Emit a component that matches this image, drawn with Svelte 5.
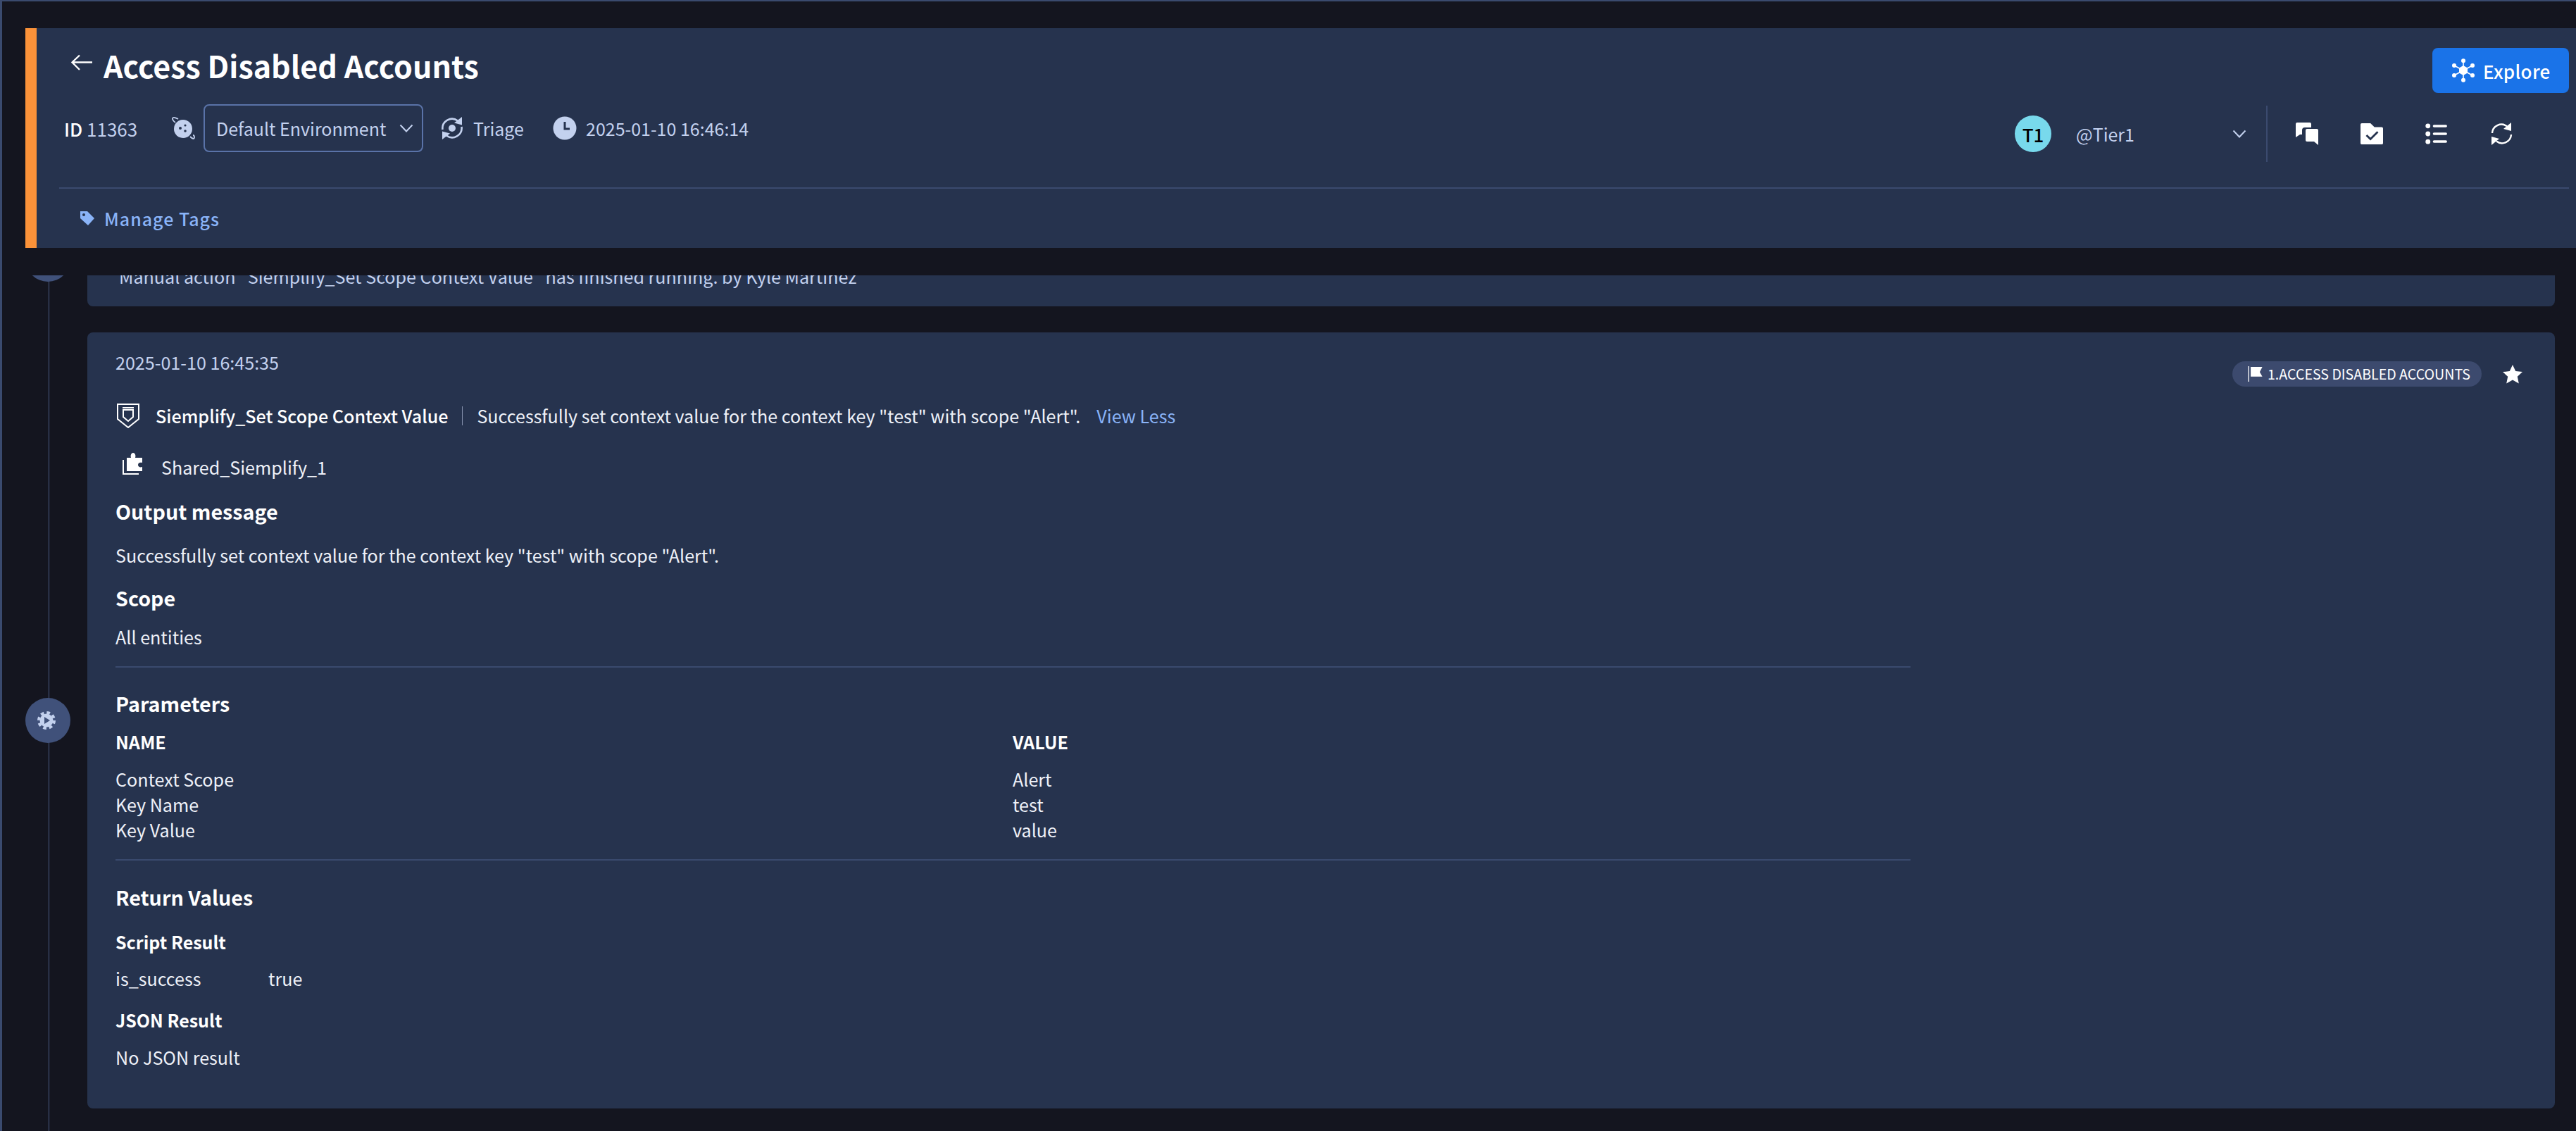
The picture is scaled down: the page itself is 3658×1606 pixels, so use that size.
<script>
  const params = [
    ['Context Scope', 'Alert'],
    ['Key Name', 'test'],
    ['Key Value', 'value']
  ];
</script>

<div class="page">
  <header class="header">
    <div class="top">
      <div class="left">
        <div class="title-row">
          <svg class="arrow" viewBox="0 0 32 24" fill="none" stroke="#fff" stroke-width="2.4"><path d="M31 11.500H3M13 1.500 2.500 11.500 13 22"/></svg>
          <h1>Access Disabled Accounts</h1>
        </div>
        <div class="meta">
          <span class="id"><b>ID</b> 11363</span>
          <svg class="planet" viewBox="0 0 34 34"><circle cx="17" cy="18" r="13" fill="#c3d1ee"/><circle cx="13" cy="17" r="2" fill="#26334e"/><circle cx="20" cy="13" r="1.600" fill="#26334e"/><circle cx="20" cy="21" r="1.800" fill="#26334e"/><path d="M6 9C2 6 1 3 3 2s5 1 7 2M27 29c3 3 6 4 6 1s-2-3-2-3" fill="none" stroke="#c3d1ee" stroke-width="1.800"/></svg>
          <div class="select">
            <span>Default Environment</span>
            <svg class="chev" viewBox="0 0 20 12" fill="none" stroke="#c3d1ee" stroke-width="2"><path d="M1.500 1.500 10 10.500l8.500-9"/></svg>
          </div>
          <svg class="triage" viewBox="0 0 32 32" fill="none" stroke="#c3d1ee" stroke-width="2.600"><path d="M2.500 18A13.500 13.500 0 0 1 24 5.500"/><path d="M29.500 14A13.500 13.500 0 0 1 8 26.500"/><path d="M30 0v11.500l-11-3z" fill="#c3d1ee" stroke="none"/><path d="M2 32V20.500l11 3z" fill="#c3d1ee" stroke="none"/><circle cx="16" cy="16" r="5" fill="#c3d1ee" stroke="none"/></svg>
          <span class="light triage-text">Triage</span>
          <svg class="clock" viewBox="0 0 34 34"><circle cx="17" cy="17" r="16.500" fill="#c3d1ee"/><path d="M17 8v10h7" fill="none" stroke="#26334e" stroke-width="3"/></svg>
          <span class="light">2025-01-10 16:46:14</span>
        </div>
      </div>
      <div class="right">
        <button class="explore">
          <svg viewBox="0 0 32 34" fill="#fff"><g stroke="#fff" stroke-width="1.600"><path d="M16 3v28M3 10l26 14M29 10 3 24"/></g><path d="M16 10l6 3.500v7L16 24l-6-3.500v-7z"/><circle cx="16" cy="3.200" r="3"/><circle cx="16" cy="30.800" r="3"/><circle cx="3" cy="10" r="3"/><circle cx="29" cy="10" r="3"/><circle cx="3" cy="24" r="3"/><circle cx="29" cy="24" r="3"/></svg>
          Explore
        </button>
        <div class="actions">
          <span class="avatar">T1</span>
          <span class="user">@Tier1</span>
          <svg class="chev" viewBox="0 0 20 12" fill="none" stroke="#c3d1ee" stroke-width="2"><path d="M1.500 1.500 10 10.500l8.500-9"/></svg>
          <span class="vr"></span>
          <div class="tools">
            <svg viewBox="0 0 32 32" fill="#fff"><path d="M2 0h18a2 2 0 0 1 2 2v5h-9a4 4 0 0 0-4 4v6H6l-6 4V2a2 2 0 0 1 2-2z"/><path d="M14 11a2 2 0 0 1 2-2h14a2 2 0 0 1 2 2v21l-6-5H16a2 2 0 0 1-2-2z"/></svg>
            <svg viewBox="0 0 34 32"><path d="M2 0h13l6 6h11a2 2 0 0 1 2 2v22a2 2 0 0 1-2 2H2a2 2 0 0 1-2-2V2a2 2 0 0 1 2-2z" fill="#fff"/><path d="M9 18l6 6 11-11" fill="none" stroke="#26334e" stroke-width="3"/></svg>
            <svg viewBox="0 0 30 28" fill="#fff"><circle cx="3.500" cy="3.500" r="3.200"/><circle cx="3.500" cy="14" r="3.200"/><circle cx="3.500" cy="24.500" r="3.200"/><rect x="10" y="2" width="19" height="3.400" rx="1.700"/><rect x="10" y="12.300" width="19" height="3.400" rx="1.700"/><rect x="10" y="22.600" width="19" height="3.400" rx="1.700"/></svg>
            <svg viewBox="0 0 32 32" fill="none" stroke="#fff" stroke-width="2.400"><path d="M3 15A13 13 0 0 1 24 5.500"/><path d="M30 17a13 13 0 0 1-21 9.500"/><path d="M30 0v12l-11-3z" fill="#fff" stroke="none"/><path d="M2 32V20l11 3z" fill="#fff" stroke="none"/></svg>
          </div>
        </div>
      </div>
    </div>
    <div class="tags">
      <svg viewBox="0 0 22 22"><path d="M1 1h10l10 10-9 10L1 11z" fill="#8ab4f8"/><circle cx="6" cy="6" r="2" fill="#26334e"/></svg>
      <span>Manage Tags</span>
    </div>
  </header>

  <div class="scroller">
    <section class="item first">
      <div class="rail"><span class="node"></span></div>
      <article class="card short">
        <p class="manual">Manual action "Siemplify_Set Scope Context Value" has finished running. by Kyle Martinez</p>
      </article>
    </section>

    <section class="item">
      <div class="rail">
        <span class="node">
          <svg viewBox="0 0 26 26"><circle cx="13" cy="13" r="9.500" fill="#c3d1ee"/><circle cx="13" cy="13" r="11" fill="none" stroke="#c3d1ee" stroke-width="4" stroke-dasharray="4.640 4"/><path d="M10 8l8 5-8 5z" fill="#40517a"/></svg>
        </span>
      </div>
      <article class="card">
        <div class="card-top">
          <time>2025-01-10 16:45:35</time>
          <div class="badges">
            <span class="chip">
              <svg viewBox="0 0 22 24" fill="#fff"><rect width="1.400" height="24" y="0"/><path d="M4 1h18l-4 8 4 7H4z"/></svg>
              <span>1.ACCESS DISABLED ACCOUNTS</span>
            </span>
            <svg class="star" viewBox="0 0 28 27" fill="#fff"><path d="M14 0l4.200 9 9.800 1.100-7.200 6.700 2 9.700L14 21.600 5.200 26.500l2-9.700L0 10.100 9.800 9z"/></svg>
          </div>
        </div>
        <div class="action-line">
          <svg class="shield" viewBox="0 0 32 35"><path d="M1 1h30v21l-15 12L1 22z" fill="none" stroke="#fff" stroke-width="2"/><path d="M9 9h14v10l-7 6-7-6z" fill="none" stroke="#fff" stroke-width="2"/><path d="M8 6h16" stroke="#fff" stroke-width="2"/></svg>
          <strong>Siemplify_Set Scope Context Value</strong>
          <span class="sep"></span>
          <span>Successfully set context value for the context key "test" with scope "Alert".</span>
          <a href="#top">View Less</a>
        </div>
        <div class="integration">
          <svg viewBox="0 0 28 32"><path d="M1 10v20h22" fill="none" stroke="#fff" stroke-width="2"/><path d="M6 7h6c-1-3 0-7 3-7s4 4 3 7h10v7c-3-1-6 0-6 3s3 4 6 3v6H6z" fill="#fff"/></svg>
          <span>Shared_Siemplify_1</span>
        </div>

        <h2 class="h-output">Output message</h2>
        <p class="p-output">Successfully set context value for the context key "test" with scope "Alert".</p>
        <h2 class="h-scope">Scope</h2>
        <p class="p-scope">All entities</p>
        <hr />
        <h2 class="h-params">Parameters</h2>
        <div class="table">
          <div class="th">NAME</div><div class="th">VALUE</div>
          {#each params as [k, v]}
            <div class="td">{k}</div><div class="td">{v}</div>
          {/each}
        </div>
        <hr class="hr2" />
        <h2 class="h-return">Return Values</h2>
        <h3 class="h-script">Script Result</h3>
        <div class="kv"><span>is_success</span><span>true</span></div>
        <h3 class="h-json">JSON Result</h3>
        <p class="p-json">No JSON result</p>
      </article>
    </section>
  </div>
</div>

<style>
  :global(body) {
    margin: 0;
    background: #14151f;
    font-family: "Noto Sans CJK JP", "Noto Sans", sans-serif;
    color: #eef1f8;
  }
  .page {
    box-sizing: border-box;
    height: 1606px;
    overflow: hidden;
    background: #14151f;
    border-top: 2px solid #3a4a6e;
    border-left: 3px solid #3a4a6e;
    display: flex;
    flex-direction: column;
  }
  .header {
    box-sizing: border-box;
    flex: none;
    height: 312px;
    margin: 38px 0 0 33px;
    padding: 0 10px 0 32px;
    background: #26334e;
    border-left: 16px solid #fb9239;
    display: flex;
    flex-direction: column;
  }
  .top {
    box-sizing: border-box;
    height: 228px;
    display: flex;
    justify-content: space-between;
    border-bottom: 2px solid #3a4a6e;
  }
  .left { padding-top: 26px; }
  .title-row { display: flex; align-items: flex-start; margin-left: 16px; height: 52px; }
  .arrow { width: 32px; height: 24px; margin-top: 11px; margin-right: 15px; }
  h1 { margin: 0; font-size: 43px; line-height: 52px; font-weight: 700; color: #fff; }
  .meta { display: flex; align-items: center; height: 68px; margin-top: 30px; margin-left: 7px; font-size: 25px; }
  .id { color: #c3d1ee; width: 152px; font-size: 26px; }
  .id b { color: #fff; font-weight: 500; }
  .planet { width: 34px; height: 34px; margin-right: 12px; }
  .select {
    box-sizing: border-box;
    width: 312px;
    height: 68px;
    border: 2px solid #5a73a8;
    border-radius: 8px;
    display: flex;
    align-items: center;
    justify-content: space-between;
    padding: 0 12px 0 16px;
    color: #c3d1ee;
    margin-right: 25px;
  }
  .chev { width: 20px; height: 12px; }
  .triage { width: 32px; height: 32px; margin-right: 14px; }
  .light { color: #c3d1ee; }
  .triage-text { width: 113px; }
  .clock { width: 34px; height: 34px; margin-right: 13px; }

  .right { padding-top: 28px; display: flex; flex-direction: column; align-items: flex-end; }
  .explore {
    box-sizing: border-box;
    width: 194px;
    height: 64px;
    border: 0;
    border-radius: 8px;
    background: #1a73e8;
    color: #fff;
    font: 500 26px "Noto Sans CJK JP", sans-serif;
    letter-spacing: .3px;
    display: flex;
    align-items: center;
    gap: 12px;
    padding: 0 0 0 28px;
  }
  .explore svg { width: 32px; height: 34px; }
  .actions { display: flex; align-items: center; height: 80px; margin-top: 18px; padding-right: 80px; font-size: 25px; }
  .avatar {
    width: 52px; height: 52px; border-radius: 50%;
    background: #78d9ec; color: #000;
    display: flex; align-items: center; justify-content: center;
    font-size: 26px; font-weight: 500;
    margin-right: 35px;
  }
  .user { width: 222px; color: #c3d1ee; }
  .vr { width: 2px; height: 80px; background: #3a4a6e; margin: 0 40px 0 28px; }
  .tools { display: flex; align-items: center; gap: 60px; }
  .tools svg { width: 32px; height: 32px; }

  .tags { flex: 1; display: flex; align-items: center; padding-left: 29px; gap: 13px; color: #8ab4f8; font-size: 25px; font-weight: 500; letter-spacing: 1px; }
  .tags svg { width: 22px; height: 22px; }

  .scroller { flex: 1; margin-top: 39px; overflow: hidden; min-height: 0; }
  .item { display: grid; grid-template-columns: 121px 1fr; margin-right: 30px; margin-bottom: 37px; }
  .first { margin-top: -90px; }
  .rail { position: relative; display: flex; align-items: center; }
  .rail::before { content: ""; position: absolute; left: 66px; top: 0; bottom: -38px; width: 1px; background: #4a5a82; }
  .node {
    position: relative;
    width: 64px; height: 64px; margin-left: 33px; border-radius: 50%;
    background: #40517a;
    display: flex; align-items: center; justify-content: center;
  }
  .node svg { width: 26px; height: 26px; margin-left: -4px; }
  .card {
    box-sizing: border-box;
    height: 1102px;
    padding: 24px 40px;
    background: #26334e;
    border-radius: 8px;
    font-size: 25.1px;
    line-height: 36px;
    position: relative;
  }
  .card.short { height: 134px; }
  .manual { margin: 49px 0 0 5px; color: #c3d1ee; }
  .card-top { display: flex; justify-content: space-between; height: 36px; }
  time { color: #c3d1ee; }
  .badges { display: flex; align-items: center; gap: 30px; margin-top: 17px; padding-right: 6px; height: 36px; }
  .chip { box-sizing: border-box; height: 36px; width: 354px; border-radius: 18px; background: #3c4a6e; display: flex; align-items: center; padding-left: 22px; gap: 7px; font-size: 19.600px; color: #fff; white-space: nowrap; }
  .chip svg { flex: none; width: 21px; height: 22px; }
  .star { width: 28px; height: 27px; }
  .action-line { display: flex; align-items: center; height: 36px; margin-top: 40px; }
  .shield { width: 32px; height: 35px; margin: 0 23px 0 2px; }
  strong { font-weight: 500; color: #fff; }
  .sep { width: 1px; height: 27px; background: #8894b0; margin: 0 20px; }
  a { color: #8ab4f8; text-decoration: none; margin-left: 23px; }
  .integration { display: flex; align-items: center; height: 36px; margin-top: 37px; margin-left: 10px; }
  .integration svg { width: 28px; height: 32px; margin-right: 27px; margin-top: -8px; }
  h2 { margin: 0; font-size: 28.700px; line-height: 36px; font-weight: 700; color: #fff; }
  h3 { margin: 0; font-size: 25px; line-height: 36px; font-weight: 700; color: #fff; }
  p { margin: 0; }
  .h-output { margin-top: 27px; }
  .p-output { margin-top: 26px; }
  .h-scope { margin-top: 25px; }
  .p-scope { margin-top: 19px; }
  hr { border: 0; height: 2px; width: 2549px; margin: 24px 0 0; background: #3a4a6e; }
  .h-params { margin-top: 33px; }
  .table { display: grid; grid-template-columns: 1274px 1fr; width: 2549px; margin-top: 18px; }
  .th { font-weight: 700; color: #fff; height: 53px; }
  .td { height: 36px; }
  .hr2 { margin-top: 24px; }
  .h-return { margin-top: 34px; }
  .h-script { margin-top: 27px; }
  .kv { display: flex; margin-top: 16px; }
  .kv span:first-child { width: 217px; }
  .h-json { margin-top: 23px; }
  .p-json { margin-top: 17px; }
</style>
